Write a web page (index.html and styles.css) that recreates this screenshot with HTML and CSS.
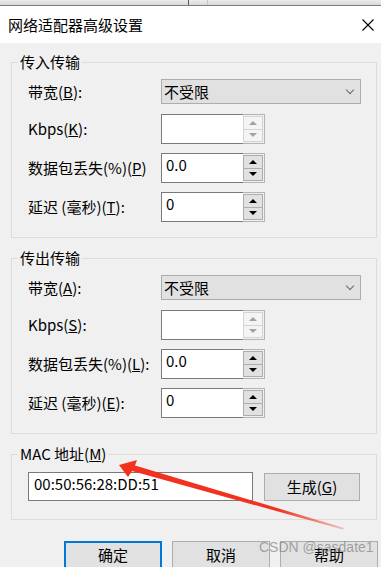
FILE: index.html
```html
<!DOCTYPE html>
<html>
<head>
<meta charset="UTF-8">
<title>网络适配器高级设置</title>
<link rel="stylesheet" href="styles.css">
</head>
<body>
	<!-- 뒤에 있는 창 가장자리 -->
	<div class="behind">
		<div class="behind-part part-a"></div>
		<div class="behind-part part-b"></div>
		<div class="behind-part"></div>
	</div>

	<div class="titlebar">
		<span class="title">网络适配器高级设置</span>
		<svg class="close" width="12" height="12" viewBox="0 0 12 12">
			<path d="M0.5 0.5 L11.5 11.5 M11.5 0.5 L0.5 11.5" stroke="#000" stroke-width="1.1" fill="none"/>
		</svg>
	</div>

	<div class="dialog">
		<fieldset class="group">
			<legend>传入传输</legend>
			<div class="rows">
				<label>带宽(<u>B</u>):</label>
				<div class="combo"><span>不受限</span><i class="chevron"></i></div>

				<label>Kbps(<u>K</u>):</label>
				<div class="spin disabled"><div class="edit"></div><div class="spin-btns"><b class="up"></b><b class="down"></b></div></div>

				<label>数据包丢失(%)(<u>P</u>)</label>
				<div class="spin"><div class="edit">0.0</div><div class="spin-btns"><b class="up"></b><b class="down"></b></div></div>

				<label>延迟 (毫秒)(<u>T</u>):</label>
				<div class="spin"><div class="edit">0</div><div class="spin-btns"><b class="up"></b><b class="down"></b></div></div>
			</div>
		</fieldset>

		<fieldset class="group group-next">
			<legend>传出传输</legend>
			<div class="rows">
				<label>带宽(<u>A</u>):</label>
				<div class="combo"><span>不受限</span><i class="chevron"></i></div>

				<label>Kbps(<u>S</u>):</label>
				<div class="spin disabled"><div class="edit"></div><div class="spin-btns"><b class="up"></b><b class="down"></b></div></div>

				<label>数据包丢失(%)(<u>L</u>):</label>
				<div class="spin"><div class="edit">0.0</div><div class="spin-btns"><b class="up"></b><b class="down"></b></div></div>

				<label>延迟 (毫秒)(<u>E</u>):</label>
				<div class="spin"><div class="edit">0</div><div class="spin-btns"><b class="up"></b><b class="down"></b></div></div>
			</div>
		</fieldset>

		<fieldset class="group group-mac">
			<legend>MAC 地址(<u>M</u>)</legend>
			<div class="mac-row">
				<div class="mac-edit">00:50:56:28:DD:51</div>
				<div class="btn btn-gen">生成(<u>G</u>)</div>
			</div>
		</fieldset>

		<div class="buttons">
			<div class="btn btn-default">确定</div>
			<div class="btn">取消</div>
			<div class="btn">帮助</div>
		</div>
	</div>

	<div class="watermark">CSDN @sasdate1</div>

	<svg class="arrow" width="381" height="567" viewBox="0 0 381 567">
		<defs>
			<linearGradient id="fade" x1="120" y1="465" x2="345" y2="529" gradientUnits="userSpaceOnUse">
				<stop offset="0" stop-color="#f2311f"/>
				<stop offset="0.7" stop-color="#f2311f"/>
				<stop offset="1" stop-color="#f2311f" stop-opacity="0.25"/>
			</linearGradient>
		</defs>
		<polygon fill="url(#fade)" points="119,465 137,460 135,465.5 344,528 343,529.5 132,471 128,477"/>
	</svg>
</body>
</html>
```

FILE: styles.css
```css
body {
	margin: 0;
	width: 381px;
	height: 567px;
	overflow: hidden;
	position: relative;
	background: #f0f0f0;
	font-family: "Noto Sans CJK SC", "Noto Sans", sans-serif;
	font-size: 15px;
	color: #000;
}

/* 뒤 창 */
.behind {
	display: flex;
	height: 5px;
	border-bottom: 1px solid #7d7d7d;
	background: linear-gradient(#ececec, #d9d9d9);
}

.behind-part {
	flex: 1;
}

.part-a {
	flex: 0 0 188px;
	border-right: 1px solid #5a5a5a;
}

.part-b {
	flex: 0 0 18px;
	border-right: 1px solid #c4c4c4;
}

.titlebar {
	height: 37px;
	background: #fff;
	display: flex;
	align-items: center;
	justify-content: space-between;
	padding: 0 7px 0 8px;
}

.title {
	line-height: 16px;
	margin-top: 1px;
}

.close {
	margin-top: 1px;
}

/* 그룹 박스 */
.group {
	margin: 11px 4px 0 11px;
	padding: 9px 0 15px 6px;
	border: 1px solid #dcdcdc;
	min-width: 0;
}

.group legend {
	padding: 0 2px;
	line-height: 16px;
	height: 16px;
}

.group-next {
	margin-top: 12px;
}

.group-mac {
	margin-top: 12px;
	padding-top: 10px;
	padding-bottom: 18px;
}

.rows {
	margin-left: 10px;
	display: grid;
	grid-template-columns: 133px 200px;
	grid-template-rows: 26px 30px 30px 30px;
	row-gap: 9px;
	align-items: center;
}

.rows label {
	line-height: 16px;
	white-space: nowrap;
}

.combo {
	align-self: start;
	height: 25px;
	box-sizing: border-box;
	border: 1px solid #adadad;
	background: #e1e1e1;
	display: flex;
	align-items: center;
	justify-content: space-between;
	padding: 0 7px 0 2px;
	line-height: 16px;
}

.chevron {
	width: 5px;
	height: 5px;
	border-right: 1px solid #6a6a6a;
	border-bottom: 1px solid #6a6a6a;
	transform: rotate(45deg);
	margin-top: -3px;
}

.spin {
	display: flex;
	width: 104px;
	height: 30px;
}

.spin .edit {
	flex: 1;
	background: #fff;
	border: 1px solid #7a7a7a;
	border-right: none;
	padding: 3px 0 0 4px;
	line-height: 16px;
}

.spin-btns {
	width: 20px;
	border: 1px solid #b4b4b4;
	border-left: none;
	padding: 1px 1px 1px 0;
	display: flex;
	flex-direction: column;
}

.spin-btns b {
	flex: 1;
	border: 1px solid #adadad;
	background: #e1e1e1;
	display: flex;
	align-items: center;
	justify-content: center;
}

.spin-btns b.down {
	border-top: none;
}

.spin-btns b::after {
	content: "";
	border-left: 4px solid transparent;
	border-right: 4px solid transparent;
}

.spin-btns b.up::after {
	border-bottom: 4px solid #000;
}

.spin-btns b.down::after {
	border-top: 4px solid #000;
}

.disabled .spin-btns b {
	border-color: #d4d4d4;
	background: #f4f4f4;
}

.disabled .spin-btns b.up::after {
	border-bottom-color: #a2a2a2;
}

.disabled .spin-btns b.down::after {
	border-top-color: #a2a2a2;
}

/* MAC */
.mac-row {
	margin-left: 10px;
	display: flex;
	gap: 11px;
}

.mac-edit {
	width: 225px;
	height: 29px;
	box-sizing: border-box;
	background: #fff;
	border: 1px solid #7a7a7a;
	padding: 3px 0 0 5px;
	line-height: 16px;
}

.btn {
	box-sizing: border-box;
	width: 97px;
	height: 28px;
	border: 1px solid #adadad;
	background: #e1e1e1;
	display: flex;
	align-items: center;
	justify-content: center;
	line-height: 16px;
}

.btn-gen {
	width: 96px;
	margin-top: 1px;
}

.buttons {
	margin-top: 21px;
	display: flex;
	justify-content: flex-end;
	gap: 10px;
	padding-right: 3px;
}

.buttons .btn {
	width: 98px;
}

.btn-default {
	border: 2px solid #0078d7;
}

.watermark {
	position: absolute;
	left: 259px;
	top: 539px;
	font-family: "Liberation Sans", sans-serif;
	font-size: 14px;
	color: rgba(130, 130, 130, 0.7);
	white-space: nowrap;
}

.arrow {
	position: absolute;
	left: 0;
	top: 0;
	pointer-events: none;
}
```
